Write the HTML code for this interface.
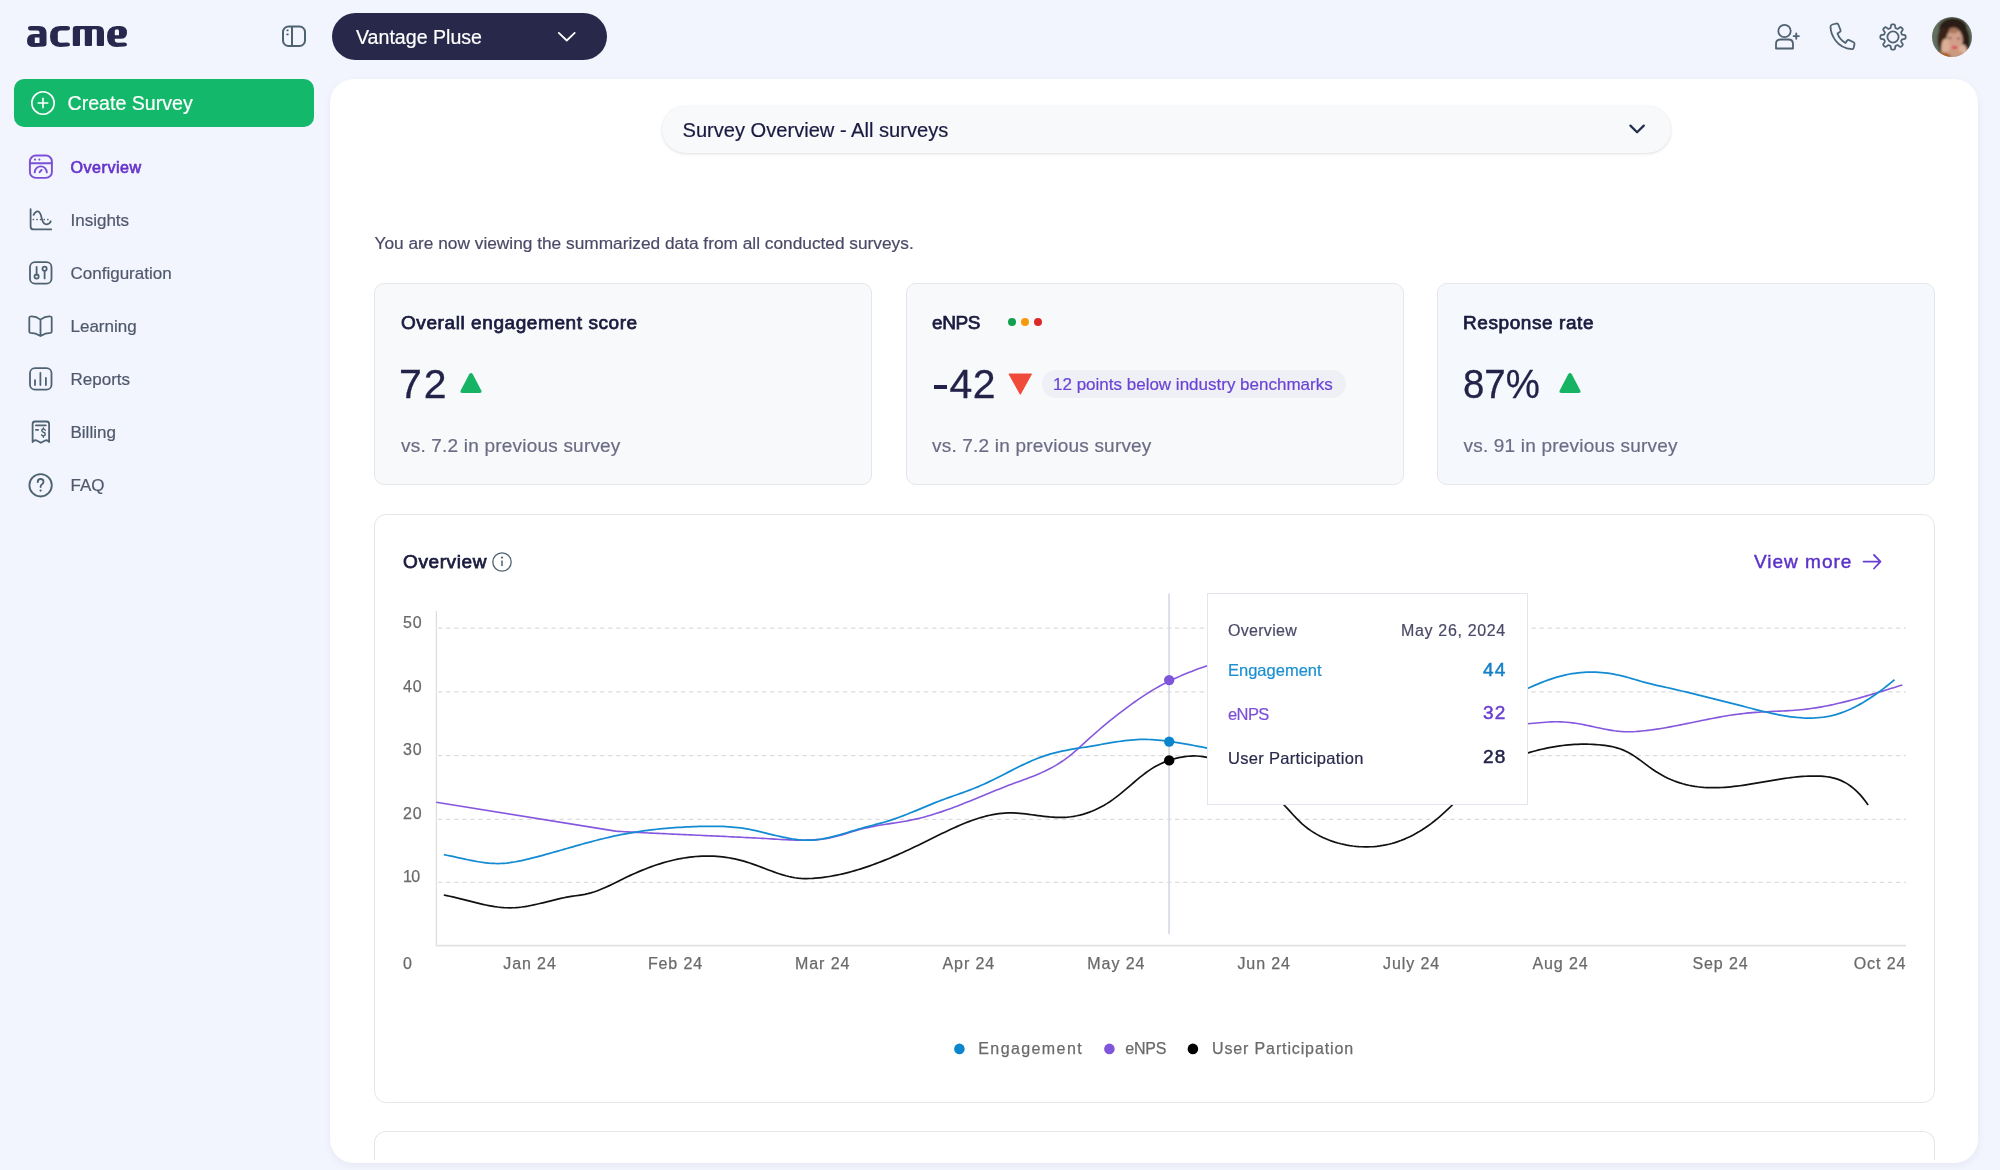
<!DOCTYPE html>
<html><head><meta charset="utf-8">
<style>
*{margin:0;padding:0;box-sizing:border-box}
html,body{width:2000px;height:1170px;overflow:hidden}
body{background:#f2f5fd;font-family:"Liberation Sans",sans-serif;position:relative;color:#1b1b3f}
.abs{position:absolute}
.t{position:absolute;white-space:nowrap;line-height:1;-webkit-text-stroke:0.2px}
svg{display:block}
.btn{left:14px;top:79px;width:300px;height:48px;background:#14b86b;border-radius:10px}
.nav{color:#4f586c;font-size:16.1px}
.nav2{color:#4f586c;font-size:17px}
.panel{left:330px;top:79px;width:1648px;height:1084px;background:#fff;border-radius:24px;box-shadow:0 3px 8px rgba(30,40,90,.055)}
.clip{left:330px;top:79px;width:1648px;height:1081px;overflow:hidden}
.card{position:absolute;top:283px;height:202px;width:498px;border:1.5px solid #e3e6eb;border-radius:10px;background:#f8f9fb}
.ct{font-size:19px;color:#1b1b3f;-webkit-text-stroke:0.75px #1b1b3f;letter-spacing:0.58px}
.big{font-size:41px;color:#23234a;-webkit-text-stroke:0.3px #23234a}
.sub{font-size:19px;color:#6b6b85;letter-spacing:0.2px}
.ax{font-size:16px;color:#666}
</style></head><body>
<div id="root" style="position:absolute;left:0;top:0;width:2000px;height:1170px;will-change:transform">

<!-- logo -->
<svg class="abs" style="left:27px;top:26px" width="100" height="21" viewBox="0 0 100 21">
<g fill="#28284e" fill-rule="evenodd">
<path d="M1,2.2 Q1,0 4,0 L12,0 Q19.5,0 19.5,7 L19.5,18.5 Q19.5,20.3 17,20.4 L7,21 Q0,21 0,15 Q0,8 7,8 L12.5,8 L12.5,6.2 Q12.5,4.5 10.5,4.5 L3.5,4.5 Q1,4.5 1,2.2 Z M7.8,11.6 L12.5,11.6 L12.5,17 L7.8,17 Z"/>
<path d="M43,2.3 Q43,0 40,0 L33,0 Q23,0 23,10.5 Q23,21 33,21 L40,20.6 Q43,20.4 43,18.6 Q43,16.5 40,16.6 L34,16.8 Q30.8,16.8 30.8,13.5 L30.8,7.5 Q30.8,4.5 34,4.5 L40,4.5 Q43,4.5 43,2.3 Z"/>
<path d="M45.8,3 Q45.8,0 49,0 L71,0 Q77,0 77,6 L77,19 Q77,20 76,20 L70.8,20 Q69.8,20 69.8,19 L69.8,4.6 Q69.8,3.3 68.5,3.3 L66.3,3.3 Q65,3.3 65,4.6 L65,19 Q65,20 64,20 L58.8,20 Q57.8,20 57.8,19 L57.8,4.6 Q57.8,3.3 56.5,3.3 L54.3,3.3 Q53,3.3 53,4.6 L53,19 Q53,20 52,20 L46.8,20 Q45.8,20 45.8,19 Z"/>
<path d="M80,10.5 Q80,0 90,0 L93,0 Q100,0 100,6.5 Q100,12.8 93.5,12.8 L87.8,12.8 L87.8,14 Q87.8,16.8 91,16.8 L97,16.5 Q100,16.4 100,18.5 Q100,20.3 97,20.5 L89,21 Q80,21 80,10.5 Z M87.8,4.8 L87.8,9.3 L92,9.3 L92,5.3 Q92,3.3 90,3.3 Q87.8,3.3 87.8,4.8 Z"/>
</g></svg>

<!-- sidebar toggle -->
<svg class="abs" style="left:280px;top:23px" width="28" height="26" viewBox="0 0 28 26" fill="none" stroke="#4f6272" stroke-width="2">
<rect x="3" y="3.5" width="22" height="19.5" rx="5.5"/>
<line x1="12" y1="3.5" x2="12" y2="23"/>
<line x1="7.2" y1="7.3" x2="7.8" y2="7.3" stroke-linecap="round" stroke-width="1.8"/>
<line x1="7.2" y1="11.4" x2="7.8" y2="11.4" stroke-linecap="round" stroke-width="1.8"/>
</svg>

<!-- vantage pill -->
<div class="abs" style="left:332px;top:12.5px;width:275px;height:47.5px;background:#28284b;border-radius:24px"></div>
<div class="t" style="left:356px;top:27.5px;font-size:19.6px;color:#fff">Vantage Pluse</div>
<svg class="abs" style="left:555px;top:28px" width="24" height="16" viewBox="0 0 24 16" fill="none" stroke="#fff" stroke-width="1.8" stroke-linecap="round" stroke-linejoin="round"><path d="M3.8,4.9 L11.75,12.5 L19.7,4.9"/></svg>

<!-- header icons -->
<svg class="abs" style="left:1772px;top:22px" width="30" height="30" viewBox="0 0 30 30" fill="none" stroke="#4f6272" stroke-width="1.8" stroke-linecap="round" stroke-linejoin="round">
<circle cx="12.5" cy="9" r="6.2"/>
<path d="M4,26.5 L4,22 Q4,17.5 8.5,17.5 L16.5,17.5 Q21,17.5 21,22 L21,26.5 Z"/>
<path d="M21.6,14.1 L26.9,14.1 M24.25,11.5 L24.25,16.8" stroke-width="1.9"/>
</svg>
<svg class="abs" style="left:1826px;top:20px" width="32" height="32" viewBox="0 0 32 32" fill="none" stroke="#4f6272" stroke-width="1.8" stroke-linejoin="round">
<path d="M6.5,4.5 L10.5,3.5 Q11.8,3.3 12.3,4.5 L14.5,10 Q15,11.2 13.8,12 L11.5,13.5 Q13.5,19.5 19.5,23 L21,20.8 Q21.8,19.6 23.1,20.1 L27.6,22.2 Q28.8,22.8 28.5,24.2 L27.6,28 Q27.2,29.3 25.8,29.2 Q15.5,28.4 9.5,20.5 Q4.6,13.8 4.5,6.8 Q4.5,5 6.5,4.5 Z"/>
</svg>
<svg class="abs" style="left:1877.2px;top:20.5px" width="32" height="32" viewBox="0 0 32 32" fill="none" stroke="#4f6272" stroke-width="1.8" stroke-linejoin="round">
<path d="M16.00,3.35 L16.22,3.35 L16.44,3.37 L16.66,3.39 L16.88,3.42 L17.10,3.47 L17.31,3.55 L17.51,3.68 L17.70,3.88 L17.87,4.19 L18.01,4.62 L18.11,5.17 L18.18,5.73 L18.26,6.23 L18.34,6.60 L18.45,6.86 L18.57,7.03 L18.70,7.15 L18.84,7.24 L18.99,7.32 L19.13,7.39 L19.28,7.45 L19.43,7.52 L19.58,7.58 L19.72,7.64 L19.87,7.70 L20.02,7.75 L20.18,7.80 L20.34,7.83 L20.52,7.84 L20.73,7.80 L20.99,7.70 L21.31,7.50 L21.72,7.20 L22.17,6.85 L22.63,6.54 L23.03,6.32 L23.37,6.23 L23.64,6.22 L23.88,6.27 L24.08,6.37 L24.27,6.48 L24.45,6.61 L24.62,6.75 L24.79,6.90 L24.94,7.06 L25.10,7.21 L25.25,7.38 L25.39,7.55 L25.52,7.73 L25.63,7.92 L25.73,8.12 L25.78,8.36 L25.77,8.63 L25.68,8.97 L25.46,9.37 L25.15,9.83 L24.80,10.28 L24.50,10.69 L24.30,11.01 L24.20,11.27 L24.16,11.48 L24.17,11.66 L24.20,11.82 L24.25,11.98 L24.30,12.13 L24.36,12.28 L24.42,12.42 L24.48,12.57 L24.55,12.72 L24.61,12.87 L24.68,13.01 L24.76,13.16 L24.85,13.30 L24.97,13.43 L25.14,13.55 L25.40,13.66 L25.77,13.74 L26.27,13.82 L26.83,13.89 L27.38,13.99 L27.81,14.13 L28.12,14.30 L28.32,14.49 L28.45,14.69 L28.53,14.90 L28.58,15.12 L28.61,15.34 L28.63,15.56 L28.65,15.78 L28.65,16.00 L28.65,16.22 L28.63,16.44 L28.61,16.66 L28.58,16.88 L28.53,17.10 L28.45,17.31 L28.32,17.51 L28.12,17.70 L27.81,17.87 L27.38,18.01 L26.83,18.11 L26.27,18.18 L25.77,18.26 L25.40,18.34 L25.14,18.45 L24.97,18.57 L24.85,18.70 L24.76,18.84 L24.68,18.99 L24.61,19.13 L24.55,19.28 L24.48,19.43 L24.42,19.58 L24.36,19.72 L24.30,19.87 L24.25,20.02 L24.20,20.18 L24.17,20.34 L24.16,20.52 L24.20,20.73 L24.30,20.99 L24.50,21.31 L24.80,21.72 L25.15,22.17 L25.46,22.63 L25.68,23.03 L25.77,23.37 L25.78,23.64 L25.73,23.88 L25.63,24.08 L25.52,24.27 L25.39,24.45 L25.25,24.62 L25.10,24.79 L24.94,24.94 L24.79,25.10 L24.62,25.25 L24.45,25.39 L24.27,25.52 L24.08,25.63 L23.88,25.73 L23.64,25.78 L23.37,25.77 L23.03,25.68 L22.63,25.46 L22.17,25.15 L21.72,24.80 L21.31,24.50 L20.99,24.30 L20.73,24.20 L20.52,24.16 L20.34,24.17 L20.18,24.20 L20.02,24.25 L19.87,24.30 L19.72,24.36 L19.58,24.42 L19.43,24.48 L19.28,24.55 L19.13,24.61 L18.99,24.68 L18.84,24.76 L18.70,24.85 L18.57,24.97 L18.45,25.14 L18.34,25.40 L18.26,25.77 L18.18,26.27 L18.11,26.83 L18.01,27.38 L17.87,27.81 L17.70,28.12 L17.51,28.32 L17.31,28.45 L17.10,28.53 L16.88,28.58 L16.66,28.61 L16.44,28.63 L16.22,28.65 L16.00,28.65 L15.78,28.65 L15.56,28.63 L15.34,28.61 L15.12,28.58 L14.90,28.53 L14.69,28.45 L14.49,28.32 L14.30,28.12 L14.13,27.81 L13.99,27.38 L13.89,26.83 L13.82,26.27 L13.74,25.77 L13.66,25.40 L13.55,25.14 L13.43,24.97 L13.30,24.85 L13.16,24.76 L13.01,24.68 L12.87,24.61 L12.72,24.55 L12.57,24.48 L12.42,24.42 L12.28,24.36 L12.13,24.30 L11.98,24.25 L11.82,24.20 L11.66,24.17 L11.48,24.16 L11.27,24.20 L11.01,24.30 L10.69,24.50 L10.28,24.80 L9.83,25.15 L9.37,25.46 L8.97,25.68 L8.63,25.77 L8.36,25.78 L8.12,25.73 L7.92,25.63 L7.73,25.52 L7.55,25.39 L7.38,25.25 L7.21,25.10 L7.06,24.94 L6.90,24.79 L6.75,24.62 L6.61,24.45 L6.48,24.27 L6.37,24.08 L6.27,23.88 L6.22,23.64 L6.23,23.37 L6.32,23.03 L6.54,22.63 L6.85,22.17 L7.20,21.72 L7.50,21.31 L7.70,20.99 L7.80,20.73 L7.84,20.52 L7.83,20.34 L7.80,20.18 L7.75,20.02 L7.70,19.87 L7.64,19.72 L7.58,19.58 L7.52,19.43 L7.45,19.28 L7.39,19.13 L7.32,18.99 L7.24,18.84 L7.15,18.70 L7.03,18.57 L6.86,18.45 L6.60,18.34 L6.23,18.26 L5.73,18.18 L5.17,18.11 L4.62,18.01 L4.19,17.87 L3.88,17.70 L3.68,17.51 L3.55,17.31 L3.47,17.10 L3.42,16.88 L3.39,16.66 L3.37,16.44 L3.35,16.22 L3.35,16.00 L3.35,15.78 L3.37,15.56 L3.39,15.34 L3.42,15.12 L3.47,14.90 L3.55,14.69 L3.68,14.49 L3.88,14.30 L4.19,14.13 L4.62,13.99 L5.17,13.89 L5.73,13.82 L6.23,13.74 L6.60,13.66 L6.86,13.55 L7.03,13.43 L7.15,13.30 L7.24,13.16 L7.32,13.01 L7.39,12.87 L7.45,12.72 L7.52,12.57 L7.58,12.42 L7.64,12.28 L7.70,12.13 L7.75,11.98 L7.80,11.82 L7.83,11.66 L7.84,11.48 L7.80,11.27 L7.70,11.01 L7.50,10.69 L7.20,10.28 L6.85,9.83 L6.54,9.37 L6.32,8.97 L6.23,8.63 L6.22,8.36 L6.27,8.12 L6.37,7.92 L6.48,7.73 L6.61,7.55 L6.75,7.38 L6.90,7.21 L7.06,7.06 L7.21,6.90 L7.38,6.75 L7.55,6.61 L7.73,6.48 L7.92,6.37 L8.12,6.27 L8.36,6.22 L8.63,6.23 L8.97,6.32 L9.37,6.54 L9.83,6.85 L10.28,7.20 L10.69,7.50 L11.01,7.70 L11.27,7.80 L11.48,7.84 L11.66,7.83 L11.82,7.80 L11.98,7.75 L12.13,7.70 L12.28,7.64 L12.42,7.58 L12.57,7.52 L12.72,7.45 L12.87,7.39 L13.01,7.32 L13.16,7.24 L13.30,7.15 L13.43,7.03 L13.55,6.86 L13.66,6.60 L13.74,6.23 L13.82,5.73 L13.89,5.17 L13.99,4.62 L14.13,4.19 L14.30,3.88 L14.49,3.68 L14.69,3.55 L14.90,3.47 L15.12,3.42 L15.34,3.39 L15.56,3.37 L15.78,3.35 Z"/>
<circle cx="16" cy="16" r="5.6"/>
</svg>
<!-- avatar -->
<svg class="abs" style="left:1932px;top:16.7px" width="40" height="40" viewBox="0 0 40 40">
<defs><clipPath id="avc"><circle cx="20" cy="20" r="20"/></clipPath><filter id="avb" x="-10%" y="-10%" width="120%" height="120%"><feGaussianBlur stdDeviation="0.9"/></filter></defs>
<g clip-path="url(#avc)"><g filter="url(#avb)">
<rect x="-2" y="-2" width="44" height="44" fill="#627060"/>
<ellipse cx="21" cy="12" rx="14" ry="11" fill="#2c1e17"/>
<ellipse cx="11" cy="23" rx="5.5" ry="13" fill="#3a2418"/>
<ellipse cx="33" cy="24" rx="4.8" ry="13" fill="#2a1b14"/>
<ellipse cx="22.5" cy="23.5" rx="8.3" ry="12" fill="#d2a08a"/>
<ellipse cx="21.5" cy="13.5" rx="5" ry="3" fill="#a8765c"/>
<ellipse cx="13.5" cy="31" rx="4.3" ry="9.5" fill="#dcb096"/>
<ellipse cx="31" cy="34" rx="4.2" ry="6.5" fill="#ddb29c"/>
<ellipse cx="22" cy="38" rx="10" ry="5" fill="#c99a80"/><ellipse cx="9" cy="42" rx="11" ry="7" fill="#a65e2c"/><ellipse cx="29" cy="43.5" rx="8" ry="4" fill="#9c5a30"/>
<ellipse cx="18" cy="21" rx="2" ry="0.8" fill="#5a4038"/>
<ellipse cx="26.5" cy="21.5" rx="2" ry="0.8" fill="#5a4038"/>
<ellipse cx="22.5" cy="30.5" rx="3" ry="1.5" fill="#d8444a"/>
</g></g></svg>

<!-- create survey -->
<div class="abs btn"></div>
<svg class="abs" style="left:30px;top:89.5px" width="26" height="26" viewBox="0 0 26 26" fill="none" stroke="#fff" stroke-width="1.6" stroke-linecap="round"><circle cx="13" cy="13" r="11.2"/><path d="M13,8.2 L13,17.8 M8.2,13 L17.8,13"/></svg>
<div class="t" style="left:67.5px;top:94px;font-size:19.6px;color:#fff">Create Survey</div>

<!-- nav -->
<svg class="abs" style="left:0;top:0" width="330" height="520" viewBox="0 0 330 520" fill="none" stroke-linecap="round" stroke-linejoin="round">
<g stroke="#7b4fd8" stroke-width="1.9">
<rect x="29.9" y="155.5" width="22" height="22.4" rx="6"/>
<path d="M29.9,163.2 L51.9,163.2"/>
<path d="M34.7,172.4 A6.05,6.05 0 0 1 46.8,172.4"/>
<path d="M39.6,172.2 L41.6,170"/>
</g>
<circle cx="35" cy="159.6" r="1.05" fill="#7b4fd8"/><circle cx="39.4" cy="159.6" r="1.05" fill="#7b4fd8"/>
<g stroke="#4f6272" stroke-width="1.8">
<path d="M30.6,209.2 L30.6,226.4 Q30.6,229.4 33.6,229.4 L51.2,229.4"/>
<path d="M33.6,214.9 Q35.4,211.2 37.8,211.3 Q40.4,211.5 41.8,218.6 Q43.3,224.6 46.8,224.4 Q49.8,224.1 50.8,221.3"/>
<path d="M33.4,219.5 L51.2,219.5" stroke-dasharray="0.01 3.6" stroke-width="1.7"/>
<rect x="30" y="262.2" width="21.5" height="21.5" rx="5"/>
<path d="M36.6,267 L36.6,274.5"/><circle cx="36.6" cy="276.6" r="2.1"/>
<circle cx="44.6" cy="268.8" r="2.1"/><path d="M44.6,270.9 L44.6,278.4"/>
<path d="M40.5,319.6 Q35.6,315.9 30.6,316.4 Q29.3,316.5 29.3,317.8 L29.3,331.4 Q29.3,332.7 30.6,332.8 Q35.6,332.8 40.5,336 Q45.4,332.8 50.4,332.8 Q51.7,332.7 51.7,331.4 L51.7,317.8 Q51.7,316.5 50.4,316.4 Q45.4,315.9 40.5,319.6 Z M40.5,319.6 L40.5,335.6"/>
<rect x="30" y="368.2" width="21.5" height="21.5" rx="5"/>
<path d="M35,380.1 L35,385 M40.4,373 L40.4,385 M45.9,377.8 L45.9,385"/>
<path d="M32.6,442 L32.6,424 Q32.6,421.5 35.1,421.5 L46.6,421.5 Q49.1,421.5 49.1,424 L49.1,442 Q47.2,439.6 45.1,440.5 L40.9,442.8 L36.7,440.5 Q34.6,439.6 32.6,442 Z"/>
<path d="M35.8,425.4 L45.9,425.4 M35.8,429.9 L38.2,429.9" stroke-width="1.6"/>
<path d="M45.2,430.2 Q44.7,429.1 43.4,429.1 Q41.8,429.1 41.8,430.6 Q41.8,432 43.4,432.3 Q45.2,432.6 45.2,434.2 Q45.2,435.8 43.4,435.8 Q42.1,435.8 41.6,434.8 M43.4,427.9 L43.4,429 M43.4,435.9 L43.4,437.2" stroke-width="1.5"/>
<circle cx="40.6" cy="485.3" r="11.2"/>
<path d="M37.7,482.2 Q37.7,479 40.6,479 Q43.5,479 43.5,481.8 Q43.5,483.5 41.8,484.5 Q40.6,485.2 40.6,486.6 L40.6,487.1"/>
</g>
<circle cx="40.6" cy="490.6" r="1.15" fill="#4f6272"/>
</svg>
<div class="t nav" style="left:70.5px;top:158.5px;color:#6634cc;-webkit-text-stroke:0.65px #6634cc;letter-spacing:0.5px">Overview</div>
<div class="t nav2" style="left:70.5px;top:211.8px">Insights</div>
<div class="t nav2" style="left:70.5px;top:264.8px">Configuration</div>
<div class="t nav2" style="left:70.5px;top:317.8px">Learning</div>
<div class="t nav2" style="left:70.5px;top:370.8px">Reports</div>
<div class="t nav2" style="left:70.5px;top:423.8px">Billing</div>
<div class="t nav2" style="left:70.5px;top:476.8px">FAQ</div>

<!-- main panel -->
<div class="abs panel"></div>
<div class="abs clip">
  <!-- dropdown -->
  <div class="abs" style="left:332px;top:27px;width:1009px;height:47px;border-radius:24px;background:#f8f9fb;box-shadow:0 1px 3px rgba(16,24,40,.12),0 0 1px rgba(16,24,40,.08)"></div>
  <div class="t" style="left:352.5px;top:41px;font-size:20.1px;color:#1a1a40">Survey Overview - All surveys</div>
  <svg class="abs" style="left:1296px;top:43px" width="20" height="14" viewBox="0 0 20 14" fill="none" stroke="#1f2e4a" stroke-width="2.2" stroke-linecap="round" stroke-linejoin="round"><path d="M4.4,3.6 L11.1,10.3 L17.8,3.6"/></svg>

  <div class="t" style="left:44.5px;top:155.5px;font-size:17.3px;color:#4a4a68">You are now viewing the summarized data from all conducted surveys.</div>
</div>

<!-- cards -->
<div class="card" style="left:374px"></div>
<div class="t ct" style="left:401px;top:312.5px">Overall engagement score</div>
<div class="t big" style="left:399px;top:363.5px;letter-spacing:2px">72</div>
<svg class="abs" style="left:458px;top:371px" width="26" height="24" viewBox="0 0 26 24"><path d="M11.2,3.3 Q13,0.8 14.8,3.3 L23.3,19.5 Q24.3,22 21.5,22 L4.5,22 Q1.7,22 2.7,19.5 Z" fill="#16b364"/></svg>
<div class="t sub" style="left:401px;top:435.8px">vs. 7.2 in previous survey</div>

<div class="card" style="left:905.5px"></div>
<div class="t ct" style="left:932px;top:312.5px;letter-spacing:-0.4px">eNPS</div>
<div class="abs" style="left:1007.6px;top:318px;width:8px;height:8px;border-radius:50%;background:#12a150"></div>
<div class="abs" style="left:1021px;top:318px;width:8px;height:8px;border-radius:50%;background:#f59a0e"></div>
<div class="abs" style="left:1034.4px;top:318px;width:8px;height:8px;border-radius:50%;background:#dc2a28"></div>
<div class="abs" style="left:933.8px;top:385.3px;width:13.5px;height:3.6px;background:#23234a"></div><div class="t big" style="left:949.5px;top:363.5px;letter-spacing:0.5px">42</div>
<svg class="abs" style="left:1007px;top:372px" width="26" height="24" viewBox="0 0 26 24"><path d="M2,2 L24.5,2 L13.3,22.3 Z" fill="#f04a3a" stroke="#f04a3a" stroke-width="1" stroke-linejoin="round"/></svg>
<div class="abs" style="left:1042.4px;top:370px;width:304px;height:27.6px;border-radius:14px;background:#eef0f6"></div>
<div class="t" style="left:1053px;top:376px;font-size:17px;color:#6a42d4">12 points below industry benchmarks</div>
<div class="t sub" style="left:932px;top:435.8px">vs. 7.2 in previous survey</div>

<div class="card" style="left:1437px;background:#f5f9fe"></div>
<div class="t ct" style="left:1463px;top:312.5px">Response rate</div>
<div class="t big" style="left:1463px;top:363.5px;transform:scaleX(0.936);transform-origin:0 0">87%</div>
<svg class="abs" style="left:1557px;top:371px" width="26" height="24" viewBox="0 0 26 24"><path d="M11.2,3.3 Q13,0.8 14.8,3.3 L23.3,19.5 Q24.3,22 21.5,22 L4.5,22 Q1.7,22 2.7,19.5 Z" fill="#16b364"/></svg>
<div class="t sub" style="left:1463.5px;top:435.8px">vs. 91 in previous survey</div>

<!-- chart card -->
<div class="abs" style="left:374px;top:514px;width:1561px;height:588.5px;border:1.5px solid #e3e6eb;border-radius:12px;background:#fff"></div>
<div class="abs" style="left:374px;top:1130.5px;width:1561px;height:29.5px;border:1.5px solid #e3e6eb;border-bottom:none;border-radius:12px 12px 0 0;background:#fff"></div>
<div class="t" style="left:403px;top:552px;font-size:19px;color:#1b1b3f;-webkit-text-stroke:0.75px #1b1b3f;letter-spacing:0.6px">Overview</div>
<svg class="abs" style="left:490px;top:550px" width="24" height="24" viewBox="0 0 24 24" fill="none" stroke="#4f6272" stroke-width="1.3"><circle cx="12" cy="12" r="9.2"/><path d="M12,10.5 L12,16" stroke-width="1.5"/><circle cx="12" cy="7.6" r=".5" fill="#4f6272"/></svg>
<div class="t" style="left:1754px;top:552px;font-size:19px;color:#5b32c8;letter-spacing:1px;-webkit-text-stroke:0.45px #5b32c8">View more</div>
<svg class="abs" style="left:1860px;top:550px" width="24" height="22" viewBox="0 0 24 22" fill="none" stroke="#6a3fd0" stroke-width="1.8" stroke-linecap="round" stroke-linejoin="round"><path d="M3.5,11.6 L20.3,11.6 M14,5 L20.5,11.6 L14,18.5"/></svg>

<svg class="abs" style="left:0;top:0" width="2000" height="1170" viewBox="0 0 2000 1170">
<g stroke="#dcdcdc" stroke-width="1.2" stroke-dasharray="4.3 3.8">
<line x1="438" y1="628.2" x2="1906" y2="628.2"/>
<line x1="438" y1="691.9" x2="1906" y2="691.9"/>
<line x1="438" y1="755.6" x2="1906" y2="755.6"/>
<line x1="438" y1="819.3" x2="1906" y2="819.3"/>
<line x1="438" y1="882.4" x2="1906" y2="882.4"/>
</g>
<line x1="436.4" y1="611" x2="436.4" y2="946" stroke="#dedede" stroke-width="1.3"/>
<line x1="436" y1="945.6" x2="1906" y2="945.6" stroke="#e2e2e2" stroke-width="1.8"/>
<line x1="1169.1" y1="593.5" x2="1169.1" y2="934" stroke="#d9dde7" stroke-width="1.8"/>
<path d="M436.2,802.2 L615.6,831.16 L618.6,831.33 L621.6,831.51 L624.6,831.68 L627.6,831.84 L630.6,832.01 L633.6,832.17 L636.6,832.33 L639.6,832.49 L642.6,832.64 L645.6,832.80 L648.6,832.95 L651.6,833.09 L654.6,833.24 L657.6,833.39 L660.6,833.53 L663.6,833.67 L666.6,833.81 L669.6,833.95 L672.6,834.09 L675.6,834.23 L678.6,834.37 L681.6,834.50 L684.6,834.64 L687.6,834.78 L690.6,834.91 L693.6,835.05 L696.6,835.18 L699.6,835.32 L702.6,835.45 L705.6,835.59 L708.6,835.72 L711.6,835.86 L714.6,836.00 L717.6,836.14 L720.6,836.27 L723.6,836.41 L726.6,836.56 L729.6,836.70 L732.6,836.84 L735.6,836.99 L738.6,837.14 L741.6,837.29 L744.6,837.44 L747.6,837.59 L750.6,837.74 L753.6,837.90 L756.6,838.06 L759.6,838.22 L762.6,838.39 L765.6,838.56 L768.6,838.73 L771.6,838.90 L774.6,839.08 L777.6,839.26 L780.6,839.44 L783.6,839.61 L786.6,839.76 L789.6,839.91 L792.6,840.03 L795.6,840.12 L798.6,840.19 L801.6,840.22 L804.6,840.20 L807.6,840.15 L810.6,840.04 L813.6,839.88 L816.6,839.66 L819.6,839.38 L822.6,839.03 L825.6,838.60 L828.6,838.10 L831.6,837.51 L834.6,836.84 L837.6,836.08 L840.6,835.25 L843.6,834.37 L846.6,833.45 L849.6,832.52 L852.6,831.60 L855.6,830.70 L858.6,829.84 L861.6,829.04 L864.6,828.30 L867.6,827.61 L870.6,826.97 L873.6,826.38 L876.6,825.83 L879.6,825.30 L882.6,824.80 L885.6,824.32 L888.6,823.85 L891.6,823.39 L894.6,822.92 L897.6,822.45 L900.6,821.97 L903.6,821.46 L906.6,820.93 L909.6,820.37 L912.6,819.78 L915.6,819.13 L918.6,818.44 L921.6,817.70 L924.6,816.92 L927.6,816.09 L930.6,815.22 L933.6,814.31 L936.6,813.36 L939.6,812.38 L942.6,811.37 L945.6,810.32 L948.6,809.25 L951.6,808.15 L954.6,807.03 L957.6,805.89 L960.6,804.72 L963.6,803.54 L966.6,802.35 L969.6,801.15 L972.6,799.93 L975.6,798.71 L978.6,797.48 L981.6,796.24 L984.6,795.01 L987.6,793.78 L990.6,792.55 L993.6,791.32 L996.6,790.11 L999.6,788.90 L1002.6,787.70 L1005.6,786.53 L1008.6,785.36 L1011.6,784.22 L1014.6,783.09 L1017.6,781.99 L1020.6,780.89 L1023.6,779.79 L1026.6,778.68 L1029.6,777.55 L1032.6,776.39 L1035.6,775.19 L1038.6,773.94 L1041.6,772.63 L1044.6,771.26 L1047.6,769.80 L1050.6,768.26 L1053.6,766.63 L1056.6,764.88 L1059.6,763.03 L1062.6,761.04 L1065.6,758.92 L1068.6,756.66 L1071.6,754.26 L1074.6,751.73 L1077.6,749.11 L1080.6,746.42 L1083.6,743.68 L1086.6,740.93 L1089.6,738.19 L1092.6,735.49 L1095.6,732.84 L1098.6,730.23 L1101.6,727.67 L1104.6,725.15 L1107.6,722.68 L1110.6,720.24 L1113.6,717.84 L1116.6,715.48 L1119.6,713.15 L1122.6,710.85 L1125.6,708.58 L1128.6,706.35 L1131.6,704.16 L1134.6,702.00 L1137.6,699.89 L1140.6,697.83 L1143.6,695.83 L1146.6,693.88 L1149.6,691.99 L1152.6,690.16 L1155.6,688.40 L1158.6,686.70 L1161.6,685.07 L1164.6,683.49 L1167.6,681.97 L1170.6,680.50 L1173.6,679.07 L1176.6,677.69 L1179.6,676.36 L1182.6,675.06 L1185.6,673.80 L1188.6,672.58 L1191.6,671.39 L1194.6,670.23 L1197.6,669.12 L1200.6,668.04 L1203.6,667.00 L1206.6,665.99 L1209.6,665.03 L1212.6,664.10 L1215.6,663.22 L1218.6,662.38 L1221.6,661.57 L1224.6,660.81 L1227.6,660.09 L1230.6,659.42 L1233.6,658.79 L1236.6,658.20 L1239.6,657.65 L1242.6,657.15 L1245.6,656.70 L1248.6,656.29 L1251.6,655.93 L1254.6,655.62 L1257.6,655.35 L1260.6,655.13 L1263.6,654.95 L1266.6,654.82 L1269.6,654.74 L1272.6,654.70 L1275.6,654.71 L1278.6,654.77 L1281.6,654.87 L1284.6,655.02 L1287.6,655.22 L1290.6,655.46 L1293.6,655.74 L1296.6,656.07 L1299.6,656.45 L1302.6,656.87 L1305.6,657.34 L1308.6,657.85 L1311.6,658.41 L1314.6,659.01 L1317.6,659.66 L1320.6,660.35 L1323.6,661.09 L1326.6,661.87 L1329.6,662.69 L1332.6,663.55 L1335.6,664.45 L1338.6,665.38 L1341.6,666.35 L1344.6,667.35 L1347.6,668.38 L1350.6,669.44 L1353.6,670.53 L1356.6,671.64 L1359.6,672.78 L1362.6,673.94 L1365.6,675.13 L1368.6,676.33 L1371.6,677.55 L1374.6,678.78 L1377.6,680.03 L1380.6,681.29 L1383.6,682.56 L1386.6,683.84 L1389.6,685.13 L1392.6,686.43 L1395.6,687.73 L1398.6,689.03 L1401.6,690.33 L1404.6,691.63 L1407.6,692.92 L1410.6,694.22 L1413.6,695.50 L1416.6,696.78 L1419.6,698.05 L1422.6,699.31 L1425.6,700.56 L1428.6,701.79 L1431.6,703.00 L1434.6,704.20 L1437.6,705.37 L1440.6,706.53 L1443.6,707.66 L1446.6,708.77 L1449.6,709.85 L1452.6,710.91 L1455.6,711.93 L1458.6,712.92 L1461.6,713.88 L1464.6,714.81 L1467.6,715.70 L1470.6,716.55 L1473.6,717.36 L1476.6,718.12 L1479.6,718.85 L1482.6,719.54 L1485.6,720.17 L1488.6,720.77 L1491.6,721.31 L1494.6,721.81 L1497.6,722.26 L1500.6,722.65 L1503.6,723.00 L1506.6,723.29 L1509.6,723.53 L1512.6,723.71 L1515.6,723.83 L1518.6,723.90 L1521.6,723.90 L1524.6,723.84 L1527.6,723.73 L1530.6,723.55 L1533.6,723.32 L1536.6,723.07 L1539.6,722.80 L1542.6,722.53 L1545.6,722.28 L1548.6,722.06 L1551.6,721.90 L1554.6,721.81 L1557.6,721.79 L1560.6,721.86 L1563.6,722.01 L1566.6,722.23 L1569.6,722.52 L1572.6,722.88 L1575.6,723.30 L1578.6,723.79 L1581.6,724.32 L1584.6,724.90 L1587.6,725.51 L1590.6,726.15 L1593.6,726.80 L1596.6,727.45 L1599.6,728.09 L1602.6,728.71 L1605.6,729.30 L1608.6,729.85 L1611.6,730.35 L1614.6,730.79 L1617.6,731.16 L1620.6,731.45 L1623.6,731.64 L1626.6,731.74 L1629.6,731.75 L1632.6,731.68 L1635.6,731.54 L1638.6,731.33 L1641.6,731.06 L1644.6,730.75 L1647.6,730.40 L1650.6,730.01 L1653.6,729.59 L1656.6,729.15 L1659.6,728.68 L1662.6,728.18 L1665.6,727.67 L1668.6,727.14 L1671.6,726.59 L1674.6,726.02 L1677.6,725.44 L1680.6,724.85 L1683.6,724.25 L1686.6,723.64 L1689.6,723.03 L1692.6,722.42 L1695.6,721.80 L1698.6,721.19 L1701.6,720.58 L1704.6,719.97 L1707.6,719.37 L1710.6,718.78 L1713.6,718.21 L1716.6,717.64 L1719.6,717.09 L1722.6,716.56 L1725.6,716.04 L1728.6,715.55 L1731.6,715.08 L1734.6,714.64 L1737.6,714.22 L1740.6,713.84 L1743.6,713.48 L1746.6,713.16 L1749.6,712.88 L1752.6,712.62 L1755.6,712.40 L1758.6,712.19 L1761.6,712.01 L1764.6,711.85 L1767.6,711.70 L1770.6,711.56 L1773.6,711.42 L1776.6,711.28 L1779.6,711.14 L1782.6,711.00 L1785.6,710.84 L1788.6,710.67 L1791.6,710.48 L1794.6,710.26 L1797.6,710.02 L1800.6,709.75 L1803.6,709.45 L1806.6,709.11 L1809.6,708.73 L1812.6,708.31 L1815.6,707.86 L1818.6,707.37 L1821.6,706.85 L1824.6,706.30 L1827.6,705.71 L1830.6,705.10 L1833.6,704.46 L1836.6,703.79 L1839.6,703.09 L1842.6,702.37 L1845.6,701.63 L1848.6,700.87 L1851.6,700.08 L1854.6,699.28 L1857.6,698.46 L1860.6,697.62 L1863.6,696.76 L1866.6,695.89 L1869.6,695.01 L1872.6,694.12 L1875.6,693.22 L1878.6,692.30 L1881.6,691.38 L1884.6,690.46 L1887.6,689.52 L1890.6,688.59 L1893.6,687.65 L1896.6,686.71 L1899.6,685.77 L1902.3,684.92" fill="none" stroke="#8457de" stroke-width="1.6"/>
<path d="M443.8,854.67 L446.8,855.24 L449.8,855.85 L452.8,856.48 L455.8,857.13 L458.8,857.79 L461.8,858.45 L464.8,859.10 L467.8,859.74 L470.8,860.36 L473.8,860.94 L476.8,861.49 L479.8,861.99 L482.8,862.43 L485.8,862.80 L488.8,863.11 L491.8,863.33 L494.8,863.46 L497.8,863.50 L500.8,863.43 L503.8,863.27 L506.8,863.01 L509.8,862.66 L512.8,862.24 L515.8,861.74 L518.8,861.18 L521.8,860.57 L524.8,859.90 L527.8,859.20 L530.8,858.46 L533.8,857.69 L536.8,856.90 L539.8,856.10 L542.8,855.29 L545.8,854.46 L548.8,853.63 L551.8,852.78 L554.8,851.94 L557.8,851.08 L560.8,850.23 L563.8,849.37 L566.8,848.51 L569.8,847.65 L572.8,846.80 L575.8,845.95 L578.8,845.10 L581.8,844.26 L584.8,843.44 L587.8,842.62 L590.8,841.81 L593.8,841.02 L596.8,840.24 L599.8,839.47 L602.8,838.73 L605.8,838.00 L608.8,837.30 L611.8,836.62 L614.8,835.96 L617.8,835.32 L620.8,834.71 L623.8,834.13 L626.8,833.57 L629.8,833.04 L632.8,832.53 L635.8,832.04 L638.8,831.58 L641.8,831.13 L644.8,830.71 L647.8,830.32 L650.8,829.94 L653.8,829.58 L656.8,829.25 L659.8,828.93 L662.8,828.64 L665.8,828.36 L668.8,828.10 L671.8,827.87 L674.8,827.65 L677.8,827.44 L680.8,827.26 L683.8,827.09 L686.8,826.93 L689.8,826.80 L692.8,826.68 L695.8,826.57 L698.8,826.48 L701.8,826.40 L704.8,826.34 L707.8,826.30 L710.8,826.28 L713.8,826.28 L716.8,826.31 L719.8,826.37 L722.8,826.47 L725.8,826.61 L728.8,826.79 L731.8,827.01 L734.8,827.28 L737.8,827.60 L740.8,827.98 L743.8,828.42 L746.8,828.92 L749.8,829.47 L752.8,830.08 L755.8,830.73 L758.8,831.41 L761.8,832.12 L764.8,832.84 L767.8,833.58 L770.8,834.31 L773.8,835.04 L776.8,835.75 L779.8,836.43 L782.8,837.09 L785.8,837.70 L788.8,838.27 L791.8,838.78 L794.8,839.22 L797.8,839.59 L800.8,839.88 L803.8,840.08 L806.8,840.18 L809.8,840.18 L812.8,840.06 L815.8,839.82 L818.8,839.47 L821.8,839.02 L824.8,838.48 L827.8,837.86 L830.8,837.16 L833.8,836.41 L836.8,835.60 L839.8,834.75 L842.8,833.87 L845.8,832.97 L848.8,832.05 L851.8,831.14 L854.8,830.23 L857.8,829.34 L860.8,828.48 L863.8,827.65 L866.8,826.84 L869.8,826.05 L872.8,825.26 L875.8,824.47 L878.8,823.66 L881.8,822.83 L884.8,821.97 L887.8,821.08 L890.8,820.13 L893.8,819.13 L896.8,818.08 L899.8,816.99 L902.8,815.86 L905.8,814.70 L908.8,813.51 L911.8,812.30 L914.8,811.07 L917.8,809.83 L920.8,808.58 L923.8,807.34 L926.8,806.09 L929.8,804.86 L932.8,803.63 L935.8,802.43 L938.8,801.26 L941.8,800.11 L944.8,798.99 L947.8,797.90 L950.8,796.83 L953.8,795.77 L956.8,794.72 L959.8,793.66 L962.8,792.59 L965.8,791.50 L968.8,790.39 L971.8,789.25 L974.8,788.06 L977.8,786.84 L980.8,785.55 L983.8,784.22 L986.8,782.84 L989.8,781.41 L992.8,779.96 L995.8,778.47 L998.8,776.97 L1001.8,775.44 L1004.8,773.91 L1007.8,772.38 L1010.8,770.85 L1013.8,769.33 L1016.8,767.83 L1019.8,766.34 L1022.8,764.89 L1025.8,763.48 L1028.8,762.10 L1031.8,760.78 L1034.8,759.51 L1037.8,758.30 L1040.8,757.16 L1043.8,756.09 L1046.8,755.10 L1049.8,754.19 L1052.8,753.35 L1055.8,752.58 L1058.8,751.86 L1061.8,751.20 L1064.8,750.59 L1067.8,750.02 L1070.8,749.47 L1073.8,748.96 L1076.8,748.46 L1079.8,747.98 L1082.8,747.51 L1085.8,747.03 L1088.8,746.55 L1091.8,746.06 L1094.8,745.55 L1097.8,745.03 L1100.8,744.51 L1103.8,743.98 L1106.8,743.46 L1109.8,742.94 L1112.8,742.44 L1115.8,741.97 L1118.8,741.51 L1121.8,741.09 L1124.8,740.70 L1127.8,740.36 L1130.8,740.06 L1133.8,739.81 L1136.8,739.62 L1139.8,739.49 L1142.8,739.43 L1145.8,739.44 L1148.8,739.50 L1151.8,739.63 L1154.8,739.81 L1157.8,740.04 L1160.8,740.32 L1163.8,740.64 L1166.8,741.00 L1169.8,741.40 L1172.8,741.84 L1175.8,742.30 L1178.8,742.79 L1181.8,743.30 L1184.8,743.84 L1187.8,744.38 L1190.8,744.94 L1193.8,745.51 L1196.8,746.09 L1199.8,746.66 L1202.8,747.23 L1205.8,747.80 L1208.8,748.35 L1211.8,748.90 L1214.8,749.43 L1217.8,749.96 L1220.8,750.47 L1223.8,750.96 L1226.8,751.44 L1229.8,751.91 L1232.8,752.36 L1235.8,752.80 L1238.8,753.22 L1241.8,753.62 L1244.8,754.00 L1247.8,754.37 L1250.8,754.71 L1253.8,755.04 L1256.8,755.34 L1259.8,755.62 L1262.8,755.89 L1265.8,756.12 L1268.8,756.34 L1271.8,756.53 L1274.8,756.70 L1277.8,756.84 L1280.8,756.96 L1283.8,757.05 L1286.8,757.11 L1289.8,757.14 L1292.8,757.15 L1295.8,757.13 L1298.8,757.07 L1301.8,756.99 L1304.8,756.87 L1307.8,756.73 L1310.8,756.55 L1313.8,756.34 L1316.8,756.09 L1319.8,755.81 L1322.8,755.50 L1325.8,755.15 L1328.8,754.76 L1331.8,754.35 L1334.8,753.90 L1337.8,753.42 L1340.8,752.91 L1343.8,752.37 L1346.8,751.80 L1349.8,751.21 L1352.8,750.59 L1355.8,749.94 L1358.8,749.26 L1361.8,748.56 L1364.8,747.84 L1367.8,747.09 L1370.8,746.33 L1373.8,745.54 L1376.8,744.72 L1379.8,743.89 L1382.8,743.04 L1385.8,742.18 L1388.8,741.29 L1391.8,740.39 L1394.8,739.47 L1397.8,738.54 L1400.8,737.59 L1403.8,736.63 L1406.8,735.65 L1409.8,734.66 L1412.8,733.66 L1415.8,732.65 L1418.8,731.62 L1421.8,730.58 L1424.8,729.53 L1427.8,728.47 L1430.8,727.40 L1433.8,726.32 L1436.8,725.22 L1439.8,724.12 L1442.8,723.00 L1445.8,721.88 L1448.8,720.74 L1451.8,719.60 L1454.8,718.45 L1457.8,717.29 L1460.8,716.12 L1463.8,714.94 L1466.8,713.75 L1469.8,712.56 L1472.8,711.35 L1475.8,710.14 L1478.8,708.93 L1481.8,707.70 L1484.8,706.48 L1487.8,705.24 L1490.8,704.00 L1493.8,702.75 L1496.8,701.50 L1499.8,700.24 L1502.8,698.98 L1505.8,697.71 L1508.8,696.44 L1511.8,695.16 L1514.8,693.88 L1517.8,692.60 L1520.8,691.32 L1523.8,690.03 L1526.8,688.73 L1529.8,687.44 L1532.8,686.15 L1535.8,684.88 L1538.8,683.62 L1541.8,682.41 L1544.8,681.23 L1547.8,680.11 L1550.8,679.05 L1553.8,678.06 L1556.8,677.15 L1559.8,676.31 L1562.8,675.55 L1565.8,674.86 L1568.8,674.25 L1571.8,673.71 L1574.8,673.26 L1577.8,672.87 L1580.8,672.56 L1583.8,672.33 L1586.8,672.17 L1589.8,672.09 L1592.8,672.09 L1595.8,672.16 L1598.8,672.30 L1601.8,672.53 L1604.8,672.82 L1607.8,673.20 L1610.8,673.64 L1613.8,674.17 L1616.8,674.77 L1619.8,675.44 L1622.8,676.17 L1625.8,676.95 L1628.8,677.78 L1631.8,678.63 L1634.8,679.49 L1637.8,680.37 L1640.8,681.23 L1643.8,682.08 L1646.8,682.90 L1649.8,683.67 L1652.8,684.41 L1655.8,685.11 L1658.8,685.79 L1661.8,686.46 L1664.8,687.11 L1667.8,687.77 L1670.8,688.43 L1673.8,689.11 L1676.8,689.81 L1679.8,690.51 L1682.8,691.23 L1685.8,691.96 L1688.8,692.69 L1691.8,693.43 L1694.8,694.18 L1697.8,694.93 L1700.8,695.69 L1703.8,696.44 L1706.8,697.20 L1709.8,697.95 L1712.8,698.71 L1715.8,699.46 L1718.8,700.21 L1721.8,700.96 L1724.8,701.71 L1727.8,702.46 L1730.8,703.21 L1733.8,703.96 L1736.8,704.71 L1739.8,705.47 L1742.8,706.22 L1745.8,706.99 L1748.8,707.75 L1751.8,708.51 L1754.8,709.28 L1757.8,710.03 L1760.8,710.78 L1763.8,711.51 L1766.8,712.22 L1769.8,712.91 L1772.8,713.58 L1775.8,714.21 L1778.8,714.81 L1781.8,715.37 L1784.8,715.89 L1787.8,716.37 L1790.8,716.79 L1793.8,717.16 L1796.8,717.48 L1799.8,717.73 L1802.8,717.92 L1805.8,718.03 L1808.8,718.08 L1811.8,718.05 L1814.8,717.93 L1817.8,717.74 L1820.8,717.45 L1823.8,717.07 L1826.8,716.60 L1829.8,716.02 L1832.8,715.34 L1835.8,714.55 L1838.8,713.65 L1841.8,712.64 L1844.8,711.51 L1847.8,710.29 L1850.8,708.95 L1853.8,707.52 L1856.8,705.99 L1859.8,704.36 L1862.8,702.65 L1865.8,700.84 L1868.8,698.95 L1871.8,696.98 L1874.8,694.93 L1877.8,692.80 L1880.8,690.60 L1883.8,688.33 L1886.8,685.99 L1889.8,683.59 L1892.8,681.13 L1894.5,679.71" fill="none" stroke="#138bd2" stroke-width="1.75"/>
<path d="M443.8,895.00 L446.8,895.59 L449.8,896.23 L452.8,896.91 L455.8,897.63 L458.8,898.37 L461.8,899.12 L464.8,899.89 L467.8,900.66 L470.8,901.43 L473.8,902.19 L476.8,902.93 L479.8,903.65 L482.8,904.33 L485.8,904.97 L488.8,905.57 L491.8,906.11 L494.8,906.59 L497.8,907.00 L500.8,907.33 L503.8,907.59 L506.8,907.75 L509.8,907.81 L512.8,907.77 L515.8,907.62 L518.8,907.36 L521.8,907.02 L524.8,906.59 L527.8,906.09 L530.8,905.52 L533.8,904.90 L536.8,904.23 L539.8,903.53 L542.8,902.80 L545.8,902.06 L548.8,901.31 L551.8,900.56 L554.8,899.82 L557.8,899.11 L560.8,898.43 L563.8,897.79 L566.8,897.20 L569.8,896.66 L572.8,896.19 L575.8,895.75 L578.8,895.31 L581.8,894.83 L584.8,894.30 L587.8,893.66 L590.8,892.90 L593.8,892.00 L596.8,890.97 L599.8,889.82 L602.8,888.57 L605.8,887.25 L608.8,885.86 L611.8,884.42 L614.8,882.94 L617.8,881.45 L620.8,879.96 L623.8,878.49 L626.8,877.04 L629.8,875.63 L632.8,874.26 L635.8,872.93 L638.8,871.63 L641.8,870.38 L644.8,869.17 L647.8,868.01 L650.8,866.89 L653.8,865.82 L656.8,864.79 L659.8,863.82 L662.8,862.90 L665.8,862.04 L668.8,861.23 L671.8,860.47 L674.8,859.77 L677.8,859.13 L680.8,858.54 L683.8,858.02 L686.8,857.55 L689.8,857.15 L692.8,856.80 L695.8,856.52 L698.8,856.30 L701.8,856.15 L704.8,856.06 L707.8,856.03 L710.8,856.07 L713.8,856.18 L716.8,856.36 L719.8,856.61 L722.8,856.92 L725.8,857.31 L728.8,857.77 L731.8,858.30 L734.8,858.91 L737.8,859.59 L740.8,860.34 L743.8,861.17 L746.8,862.08 L749.8,863.05 L752.8,864.09 L755.8,865.17 L758.8,866.28 L761.8,867.41 L764.8,868.55 L767.8,869.69 L770.8,870.81 L773.8,871.90 L776.8,872.95 L779.8,873.95 L782.8,874.89 L785.8,875.74 L788.8,876.51 L791.8,877.17 L794.8,877.72 L797.8,878.15 L800.8,878.43 L803.8,878.58 L806.8,878.60 L809.8,878.52 L812.8,878.37 L815.8,878.15 L818.8,877.87 L821.8,877.54 L824.8,877.16 L827.8,876.72 L830.8,876.24 L833.8,875.70 L836.8,875.12 L839.8,874.49 L842.8,873.81 L845.8,873.09 L848.8,872.32 L851.8,871.51 L854.8,870.66 L857.8,869.77 L860.8,868.84 L863.8,867.88 L866.8,866.87 L869.8,865.84 L872.8,864.76 L875.8,863.66 L878.8,862.52 L881.8,861.35 L884.8,860.16 L887.8,858.93 L890.8,857.68 L893.8,856.40 L896.8,855.10 L899.8,853.77 L902.8,852.43 L905.8,851.06 L908.8,849.67 L911.8,848.26 L914.8,846.84 L917.8,845.40 L920.8,843.94 L923.8,842.47 L926.8,840.99 L929.8,839.51 L932.8,838.02 L935.8,836.54 L938.8,835.07 L941.8,833.60 L944.8,832.16 L947.8,830.73 L950.8,829.33 L953.8,827.95 L956.8,826.61 L959.8,825.30 L962.8,824.04 L965.8,822.82 L968.8,821.65 L971.8,820.54 L974.8,819.48 L977.8,818.49 L980.8,817.56 L983.8,816.71 L986.8,815.92 L989.8,815.22 L992.8,814.60 L995.8,814.07 L998.8,813.63 L1001.8,813.29 L1004.8,813.05 L1007.8,812.91 L1010.8,812.88 L1013.8,812.95 L1016.8,813.10 L1019.8,813.33 L1022.8,813.61 L1025.8,813.95 L1028.8,814.32 L1031.8,814.72 L1034.8,815.13 L1037.8,815.54 L1040.8,815.94 L1043.8,816.32 L1046.8,816.66 L1049.8,816.96 L1052.8,817.19 L1055.8,817.36 L1058.8,817.44 L1061.8,817.42 L1064.8,817.31 L1067.8,817.08 L1070.8,816.75 L1073.8,816.31 L1076.8,815.76 L1079.8,815.10 L1082.8,814.32 L1085.8,813.42 L1088.8,812.40 L1091.8,811.26 L1094.8,809.99 L1097.8,808.59 L1100.8,807.07 L1103.8,805.42 L1106.8,803.63 L1109.8,801.70 L1112.8,799.64 L1115.8,797.44 L1118.8,795.11 L1121.8,792.68 L1124.8,790.18 L1127.8,787.63 L1130.8,785.05 L1133.8,782.48 L1136.8,779.94 L1139.8,777.45 L1142.8,775.05 L1145.8,772.76 L1148.8,770.60 L1151.8,768.60 L1154.8,766.78 L1157.8,765.15 L1160.8,763.69 L1163.8,762.38 L1166.8,761.20 L1169.8,760.15 L1172.8,759.20 L1175.8,758.37 L1178.8,757.65 L1181.8,757.05 L1184.8,756.58 L1187.8,756.24 L1190.8,756.03 L1193.8,755.95 L1196.8,756.02 L1199.8,756.24 L1202.8,756.60 L1205.8,757.12 L1208.8,757.79 L1211.8,758.62 L1214.8,759.58 L1217.8,760.68 L1220.8,761.89 L1223.8,763.22 L1226.8,764.65 L1229.8,766.16 L1232.8,767.76 L1235.8,769.43 L1238.8,771.15 L1241.8,772.93 L1244.8,774.74 L1247.8,776.59 L1250.8,778.48 L1253.8,780.41 L1256.8,782.41 L1259.8,784.47 L1262.8,786.62 L1265.8,788.86 L1268.8,791.19 L1271.8,793.64 L1274.8,796.22 L1277.8,798.92 L1280.8,801.77 L1283.8,804.77 L1286.8,807.93 L1289.8,811.19 L1292.8,814.47 L1295.8,817.67 L1298.8,820.71 L1301.8,823.52 L1304.8,826.10 L1307.8,828.46 L1310.8,830.62 L1313.8,832.59 L1316.8,834.38 L1319.8,836.01 L1322.8,837.49 L1325.8,838.84 L1328.8,840.05 L1331.8,841.15 L1334.8,842.13 L1337.8,843.00 L1340.8,843.77 L1343.8,844.45 L1346.8,845.04 L1349.8,845.55 L1352.8,845.98 L1355.8,846.32 L1358.8,846.58 L1361.8,846.75 L1364.8,846.84 L1367.8,846.84 L1370.8,846.74 L1373.8,846.56 L1376.8,846.28 L1379.8,845.91 L1382.8,845.44 L1385.8,844.88 L1388.8,844.21 L1391.8,843.45 L1394.8,842.58 L1397.8,841.62 L1400.8,840.55 L1403.8,839.37 L1406.8,838.09 L1409.8,836.70 L1412.8,835.19 L1415.8,833.58 L1418.8,831.86 L1421.8,830.02 L1424.8,828.07 L1427.8,826.00 L1430.8,823.82 L1433.8,821.52 L1436.8,819.09 L1439.8,816.55 L1442.8,813.90 L1445.8,811.17 L1448.8,808.36 L1451.8,805.50 L1454.8,802.59 L1457.8,799.66 L1460.8,796.72 L1463.8,793.78 L1466.8,790.86 L1469.8,787.98 L1472.8,785.15 L1475.8,782.39 L1478.8,779.71 L1481.8,777.13 L1484.8,774.67 L1487.8,772.33 L1490.8,770.14 L1493.8,768.10 L1496.8,766.21 L1499.8,764.45 L1502.8,762.82 L1505.8,761.31 L1508.8,759.90 L1511.8,758.60 L1514.8,757.38 L1517.8,756.25 L1520.8,755.19 L1523.8,754.20 L1526.8,753.26 L1529.8,752.36 L1532.8,751.51 L1535.8,750.71 L1538.8,749.94 L1541.8,749.23 L1544.8,748.55 L1547.8,747.93 L1550.8,747.35 L1553.8,746.81 L1556.8,746.33 L1559.8,745.89 L1562.8,745.50 L1565.8,745.15 L1568.8,744.86 L1571.8,744.62 L1574.8,744.43 L1577.8,744.28 L1580.8,744.19 L1583.8,744.15 L1586.8,744.17 L1589.8,744.23 L1592.8,744.35 L1595.8,744.53 L1598.8,744.75 L1601.8,745.04 L1604.8,745.39 L1607.8,745.82 L1610.8,746.36 L1613.8,747.02 L1616.8,747.82 L1619.8,748.77 L1622.8,749.90 L1625.8,751.22 L1628.8,752.74 L1631.8,754.48 L1634.8,756.40 L1637.8,758.47 L1640.8,760.64 L1643.8,762.86 L1646.8,765.10 L1649.8,767.31 L1652.8,769.44 L1655.8,771.45 L1658.8,773.33 L1661.8,775.07 L1664.8,776.68 L1667.8,778.16 L1670.8,779.51 L1673.8,780.74 L1676.8,781.86 L1679.8,782.87 L1682.8,783.76 L1685.8,784.56 L1688.8,785.25 L1691.8,785.85 L1694.8,786.35 L1697.8,786.77 L1700.8,787.11 L1703.8,787.37 L1706.8,787.55 L1709.8,787.66 L1712.8,787.71 L1715.8,787.69 L1718.8,787.61 L1721.8,787.48 L1724.8,787.29 L1727.8,787.06 L1730.8,786.78 L1733.8,786.47 L1736.8,786.11 L1739.8,785.72 L1742.8,785.30 L1745.8,784.86 L1748.8,784.39 L1751.8,783.91 L1754.8,783.41 L1757.8,782.90 L1760.8,782.38 L1763.8,781.86 L1766.8,781.34 L1769.8,780.82 L1772.8,780.31 L1775.8,779.81 L1778.8,779.32 L1781.8,778.86 L1784.8,778.42 L1787.8,778.00 L1790.8,777.61 L1793.8,777.26 L1796.8,776.94 L1799.8,776.66 L1802.8,776.43 L1805.8,776.25 L1808.8,776.12 L1811.8,776.05 L1814.8,776.03 L1817.8,776.08 L1820.8,776.20 L1823.8,776.41 L1826.8,776.74 L1829.8,777.20 L1832.8,777.82 L1835.8,778.63 L1838.8,779.64 L1841.8,780.88 L1844.8,782.38 L1847.8,784.14 L1850.8,786.21 L1853.8,788.59 L1856.8,791.31 L1859.8,794.40 L1862.8,797.88 L1865.8,801.76 L1868.1,805.03" fill="none" stroke="#111" stroke-width="1.7"/>
<circle cx="1169.2" cy="680.1" r="5.2" fill="#7f56d9"/>
<circle cx="1169.2" cy="741.6" r="5.2" fill="#0b86cc"/>
<circle cx="1169.2" cy="760.4" r="5.2" fill="#000"/>
<g font-family="Liberation Sans" font-size="16" fill="#6a6a6a" stroke="#6a6a6a" stroke-width="0.25">
<g letter-spacing="0.8">
<text x="403" y="627.8">50</text><text x="403" y="691.5">40</text><text x="403" y="755.2">30</text><text x="403" y="818.9">20</text><text x="403" y="882.4" letter-spacing="-0.6">10</text><text x="403" y="968.9">0</text></g>
<g text-anchor="middle" letter-spacing="0.9">
<text x="530" y="968.9">Jan 24</text><text x="675.5" y="968.9">Feb 24</text><text x="822.7" y="968.9">Mar 24</text><text x="968.8" y="968.9">Apr 24</text><text x="1116.3" y="968.9">May 24</text><text x="1264.2" y="968.9">Jun 24</text><text x="1411.5" y="968.9">July 24</text><text x="1560.5" y="968.9">Aug 24</text><text x="1720.5" y="968.9">Sep 24</text><text x="1880" y="968.9">Oct 24</text>
</g>
<g letter-spacing="1.1"><text x="978.3" y="1053.7" letter-spacing="1.4">Engagement</text><text x="1125.3" y="1053.7" letter-spacing="-0.2">eNPS</text><text x="1212" y="1053.7" letter-spacing="0.87">User Participation</text></g>
</g>
<circle cx="959.4" cy="1048.9" r="5.3" fill="#0b86cc"/>
<circle cx="1109.4" cy="1048.9" r="5.3" fill="#7f56d9"/>
<circle cx="1192.9" cy="1048.9" r="5.3" fill="#000"/>
</svg>

<!-- tooltip -->
<div class="abs" style="left:1206.5px;top:593.3px;width:321px;height:211.5px;background:#fff;border:1.3px solid #e1e5ee"></div>
<div class="t" style="left:1228px;top:622.5px;font-size:16px;color:#4a4a68;letter-spacing:0.3px">Overview</div>
<div class="t" style="right:494.15px;top:622.5px;font-size:16px;color:#4a4a68;letter-spacing:0.65px">May 26, 2024</div>
<div class="t" style="left:1228px;top:662px;font-size:16.5px;color:#1a8fd1">Engagement</div>
<div class="t" style="right:493.8px;top:659.5px;font-size:19px;color:#1680c8;letter-spacing:1px;-webkit-text-stroke:0.5px #1680c8">44</div>
<div class="t" style="left:1228px;top:706px;font-size:16.5px;color:#7c4fd9;letter-spacing:-0.6px">eNPS</div>
<div class="t" style="right:493.8px;top:702.5px;font-size:19px;color:#6a3fd0;letter-spacing:1px;-webkit-text-stroke:0.5px #6a3fd0">32</div>
<div class="t" style="left:1228px;top:749.5px;font-size:16.5px;color:#2a2a4c;letter-spacing:0.3px">User Participation</div>
<div class="t" style="right:493.8px;top:747px;font-size:19px;color:#23234a;letter-spacing:1px;-webkit-text-stroke:0.5px #23234a">28</div>

</div>
</body></html>
